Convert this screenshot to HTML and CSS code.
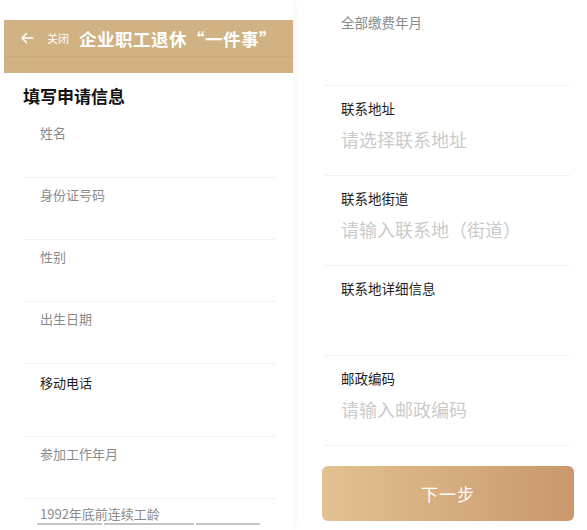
FILE: index.html
```html
<!DOCTYPE html>
<html lang="zh-CN">
<head>
  <meta charset="UTF-8">
  <meta name="viewport" content="width=device-width, initial-scale=1">
  <title>企业职工退休“一件事”</title>
  <link rel="stylesheet" href="styles.css">
</head>
<body>

<div class="page">
  <div class="screen left">
    <div class="topbar">
      <div class="nav">
        <svg class="back" width="14" height="12" viewBox="0 0 14 12">
          <path d="M13 6H2M6.5 1.5L2 6l4.5 4.5" fill="none" stroke="#fff" stroke-width="1.6" stroke-linecap="round" stroke-linejoin="round"/>
        </svg>
        <span class="close">关闭</span>
        <span class="title">企业职工退休“一件事”</span>
      </div>
    </div>

    <h2 class="section-title">填写申请信息</h2>

    <div class="field"><div class="label">姓名</div></div>
    <div class="field"><div class="label">身份证号码</div></div>
    <div class="field"><div class="label">性别</div></div>
    <div class="field"><div class="label">出生日期</div></div>
    <div class="field tall"><div class="label dark">移动电话</div></div>
    <div class="field"><div class="label">参加工作年月</div></div>
    <div class="field last">
      <div class="label">1992年底前连续工龄</div>
      <div class="cut-lines">
        <span style="width:65px"></span>
        <span style="width:90px"></span>
        <span style="width:64px"></span>
      </div>
    </div>
  </div>

  <div class="screen right">
    <div class="row first"><div class="label">全部缴费年月</div></div>
    <div class="row">
      <div class="label dark">联系地址</div>
      <div class="placeholder">请选择联系地址</div>
    </div>
    <div class="row">
      <div class="label dark">联系地街道</div>
      <div class="placeholder">请输入联系地（街道）</div>
    </div>
    <div class="row">
      <div class="label dark">联系地详细信息</div>
    </div>
    <div class="row">
      <div class="label dark">邮政编码</div>
      <div class="placeholder">请输入邮政编码</div>
    </div>
    <button class="next">下一步</button>
  </div>
</div>

</body>
</html>
```

FILE: styles.css
```css
body {
  margin: 0;
  background: #fff;
  font-family: "Noto Sans CJK SC", "Noto Sans", sans-serif;
  color: #222;
}
.page {
  display: flex;
  height: 530px;
  overflow: hidden;
}
.screen {
  background: #fff;
}
.left {
  width: 289px;
  margin-left: 4px;
  margin-right: 7px;
  box-shadow: 3px 0 4px rgba(0,0,0,0.03);
}
.right {
  flex: 1;
}

.topbar {
  margin-top: 20px;
  height: 53px;
  background: #d0b283;
}
.nav {
  display: flex;
  align-items: center;
  height: 36px;
  padding-left: 16px;
  border-bottom: 1px solid #c8aa7b;
  color: #fff;
}
.back {
  margin-right: 13px;
}
.close {
  font-size: 11px;
  margin-right: 10px;
}
.title {
  font-size: 17.5px;
  font-weight: bold;
  letter-spacing: 0.5px;
}

.section-title {
  margin: 11px 0 8px 19px;
  font-size: 17px;
  line-height: 24px;
  font-weight: bold;
  color: #111;
}

.field {
  box-sizing: border-box;
  height: 62px;
  margin: 0 18px 0 19px;
  padding: 8px 0 0 17px;
  border-bottom: 1px solid #f1f1f1;
}
.field.tall {
  height: 73px;
  padding-top: 10px;
}
.field.last {
  border-bottom: none;
  padding-top: 6px;
}
.label {
  font-size: 13px;
  line-height: 18px;
  color: #8a8a8a;
}
.label.dark {
  color: #1e1e1e;
}
.cut-lines {
  display: flex;
  gap: 2px;
  margin: 0 0 0 -3px;
}
.cut-lines span {
  height: 2px;
  background: #c4c4c4;
}

.row {
  box-sizing: border-box;
  height: 90px;
  margin: 0 17px 0 25px;
  padding: 13px 0 0 16px;
  border-bottom: 1px solid #f1f1f1;
}
.row.first {
  height: 86px;
}
.row .label {
  font-size: 13.5px;
}
.placeholder {
  margin-top: 10px;
  font-size: 18px;
  line-height: 24px;
  color: #cbcbcb;
}

.next {
  display: block;
  width: 252px;
  height: 55px;
  margin: 20px 0 0 22px;
  border: none;
  border-radius: 6px;
  background: linear-gradient(90deg, #e3c190, #c9986c);
  color: #fff;
  font-family: inherit;
  font-size: 17px;
  letter-spacing: 1px;
}
```
